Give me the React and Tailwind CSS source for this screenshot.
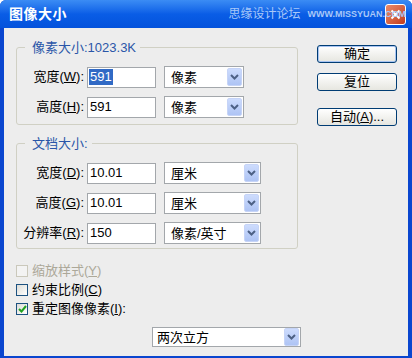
import React from 'react'

const ui = "font-['Liberation_Sans','Noto_Sans_CJK_SC',sans-serif]"

function Arrow() {
  return (
    <span className="w-[15px] h-[18px] flex items-center justify-center rounded-[2px] border border-[#c6d4f7] bg-linear-to-b from-[#cddcfd] to-[#aec4f4]">
      <svg width="9" height="6" viewBox="0 0 9 6">
        <path d="M1 1l3.5 3.5L8 1" stroke="#4d6185" strokeWidth="2" fill="none" />
      </svg>
    </span>
  )
}

function Select({ value, w, h = 'h-[22px]', pl = 'pl-[6px]' }) {
  return (
    <div className={`${w} ${h} ${pl} flex items-center justify-between border border-[#a3a7ab] bg-white pr-[1px] text-[13px] text-black`}>
      <span className="leading-none">{value}</span>
      <Arrow />
    </div>
  )
}

function Field({ label, mnemonic, value, unit, selW, selected }) {
  return (
    <div className="flex items-center h-[22px]">
      <span className="w-[67px] text-right text-[13px] text-black whitespace-nowrap">
        {label}(<u>{mnemonic}</u>):
      </span>
      <div className="ml-[3px] w-[69px] h-[21px] border border-[#a3a7ab] bg-white flex items-center pl-[1px] text-[13px]">
        {selected ? (
          <span className="bg-[#316ac5] text-white px-[1px] leading-[16px]">{value}</span>
        ) : (
          <span className="px-[1px] leading-[16px]">{value}</span>
        )}
      </div>
      <div className="ml-[8px]">
        <Select value={unit} w={selW} />
      </div>
    </div>
  )
}

function Check({ checked, disabled, children }) {
  return (
    <div className="flex items-center h-[19px]">
      <span
        className={`w-[12px] h-[12px] flex items-center justify-center border ${
          disabled ? 'border-[#cac8bb] bg-[#f3f3f3]' : 'border-[#1c5180] bg-linear-to-br from-[#dcdcd7] to-white'
        }`}
      >
        {checked && (
          <svg width="9" height="8" viewBox="0 0 9 8">
            <path d="M1 4l2.5 2.5L8 1" stroke="#21a121" strokeWidth="2" fill="none" />
          </svg>
        )}
      </span>
      <span className={`ml-[4px] text-[13px] ${disabled ? 'text-[#aca899]' : 'text-black'}`}>{children}</span>
    </div>
  )
}

function XpButton({ children, focused }) {
  return (
    <div
      className={`w-[80px] h-[18px] flex items-center justify-center rounded-[3px] border border-[#003c74] bg-linear-to-b from-white to-[#e6e6e0] text-[13px] text-black ${
        focused ? 'shadow-[inset_0_0_0_1px_#a8c4f2]' : ''
      }`}
    >
      {children}
    </div>
  )
}

export default function App() {
  return (
    <div className={`${ui} w-[412px] h-[358px] flex flex-col bg-[#0a46cf] rounded-t-[6px] overflow-hidden`}>
      {/* title bar */}
      <div className="relative h-[28px] flex items-center bg-linear-to-b from-[#3b8cf4] via-[#0a5de6] to-[#0452dc] pl-[9px]">
        <span className="text-white font-bold text-[14px] tracking-[0.5px]">图像大小</span>
        <div className="absolute left-[385px] top-[4px] w-[21px] h-[21px] rounded-[3px] border border-white bg-linear-to-br from-[#e88a6a] to-[#c23a1a] flex items-center justify-center">
          <svg width="11" height="11" viewBox="0 0 11 11">
            <path d="M1.5 1.5l8 8M9.5 1.5l-8 8" stroke="white" strokeWidth="2" />
          </svg>
        </div>
        <div className="relative z-10 ml-auto mr-[6px] flex items-center gap-[7px] whitespace-nowrap text-[#a8c8f8]">
          <span className="text-[12px] leading-none">思缘设计论坛</span>
          <span className="text-[9px] font-bold leading-none">WWW.MISSYUAN.COM</span>
        </div>
      </div>

      {/* client area */}
      <div className="flex-1 mx-[4px] mb-[2px] bg-[#ededed] flex">
        <div className="ml-[12px] w-[282px] flex flex-col">
          <fieldset className="mt-[12px] border border-[#d0d0c4] rounded-[3px]">
            <legend className="ml-[8px] pl-[7px] pr-[4px] text-[13px] leading-[15px] text-[#2a56a8]">像素大小:1023.3K</legend>
            <div className="pt-[11px] pb-[6px] flex flex-col gap-[8px]">
              <Field label="宽度" mnemonic="W" value="591" unit="像素" selW="w-[80px]" selected />
              <Field label="高度" mnemonic="H" value="591" unit="像素" selW="w-[80px]" />
            </div>
          </fieldset>

          <fieldset className="mt-[11px] border border-[#d0d0c4] rounded-[3px]">
            <legend className="ml-[8px] pl-[7px] pr-[4px] text-[13px] leading-[15px] text-[#2a56a8]">文档大小:</legend>
            <div className="pt-[11px] pb-[4px] flex flex-col gap-[8px]">
              <Field label="宽度" mnemonic="D" value="10.01" unit="厘米" selW="w-[97px]" />
              <Field label="高度" mnemonic="G" value="10.01" unit="厘米" selW="w-[97px]" />
              <Field label="分辨率" mnemonic="R" value="150" unit="像素/英寸" selW="w-[97px]" />
            </div>
          </fieldset>

          <div className="mt-[12px] flex flex-col">
            <Check disabled>缩放样式(<u>Y</u>)</Check>
            <Check>约束比例(<u>C</u>)</Check>
            <Check checked>重定图像像素(<u>I</u>):</Check>
          </div>

          <div className="mt-[9px] ml-[136px]">
            <Select value="两次立方" w="w-[149px]" h="h-[20px]" pl="pl-[4px]" />
          </div>
        </div>

        <div className="ml-[19px] pt-[17px] flex flex-col">
          <XpButton focused>确定</XpButton>
          <div className="mt-[10px]">
            <XpButton>复位</XpButton>
          </div>
          <div className="mt-[17px]">
            <XpButton>
              自动(<u>A</u>)...
            </XpButton>
          </div>
        </div>
      </div>
    </div>
  )
}
